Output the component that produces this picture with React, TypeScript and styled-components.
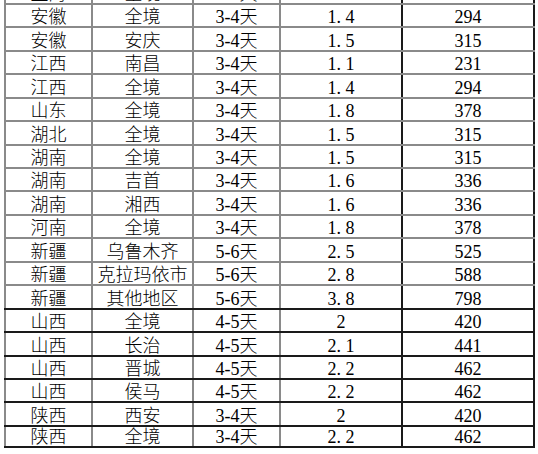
import styled, { createGlobalStyle } from "styled-components"

const GlobalStyle = createGlobalStyle`
  html, body {
    margin: 0;
    padding: 0;
    background: #ffffff;
    overflow: hidden;
  }
`

const Viewport = styled.div`
  width: 538px;
  height: 454px;
  overflow: hidden;
  background: #ffffff;
`

// the sheet is scrolled so the first row is cut at the top
const Sheet = styled.div`
  display: flex;
  flex-direction: column;
  margin-top: -20.5px;
  margin-left: 4px;
  width: 531px;
  font-family: "Liberation Serif", "Noto Sans CJK SC", serif;
  font-size: 18px;
  font-weight: 300;
  color: #000000;
`

const Row = styled.div<{ $bold?: boolean; $last?: boolean }>`
  display: grid;
  grid-template-columns: 89px 101px 87px 122px 132px;
  box-sizing: border-box;
  height: 23.45px;
  border-top: 2px solid ${(p) => (p.$bold ? "#1a1a1a" : "#8a8a8a")};
  border-bottom: ${(p) => (p.$last ? "2px solid #1a1a1a" : "none")};
`

const Cell = styled.div<{ $edge?: "first" | "dark" }>`
  box-sizing: border-box;
  display: flex;
  align-items: flex-end;
  justify-content: center;
  line-height: 1;
  padding-bottom: 0;
  white-space: nowrap;
  border-right: 2px solid
    ${(p) => (p.$edge === "dark" ? "#1a1a1a" : "#8a8a8a")};
  border-left: ${(p) => (p.$edge === "first" ? "2px solid #8a8a8a" : "none")};
`

const Dot = styled.span`
  display: inline-block;
  width: 9px;
  text-align: left;
`

type Rate = {
  province: string
  city: string
  days: string
  factor: string
  price: string
}

const rates: Rate[] = [
  { province: "上海", city: "全境", days: "1-2天", factor: "1.2", price: "252" },
  { province: "安徽", city: "全境", days: "3-4天", factor: "1.4", price: "294" },
  { province: "安徽", city: "安庆", days: "3-4天", factor: "1.5", price: "315" },
  { province: "江西", city: "南昌", days: "3-4天", factor: "1.1", price: "231" },
  { province: "江西", city: "全境", days: "3-4天", factor: "1.4", price: "294" },
  { province: "山东", city: "全境", days: "3-4天", factor: "1.8", price: "378" },
  { province: "湖北", city: "全境", days: "3-4天", factor: "1.5", price: "315" },
  { province: "湖南", city: "全境", days: "3-4天", factor: "1.5", price: "315" },
  { province: "湖南", city: "吉首", days: "3-4天", factor: "1.6", price: "336" },
  { province: "湖南", city: "湘西", days: "3-4天", factor: "1.6", price: "336" },
  { province: "河南", city: "全境", days: "3-4天", factor: "1.8", price: "378" },
  { province: "新疆", city: "乌鲁木齐", days: "5-6天", factor: "2.5", price: "525" },
  { province: "新疆", city: "克拉玛依市", days: "5-6天", factor: "2.8", price: "588" },
  { province: "新疆", city: "其他地区", days: "5-6天", factor: "3.8", price: "798" },
  { province: "山西", city: "全境", days: "4-5天", factor: "2", price: "420" },
  { province: "山西", city: "长治", days: "4-5天", factor: "2.1", price: "441" },
  { province: "山西", city: "晋城", days: "4-5天", factor: "2.2", price: "462" },
  { province: "山西", city: "侯马", days: "4-5天", factor: "2.2", price: "462" },
  { province: "陕西", city: "西安", days: "3-4天", factor: "2", price: "420" },
  { province: "陕西", city: "全境", days: "3-4天", factor: "2.2", price: "462" }
]

// rows from 山西 down have the heavy borders
const BOLD_FROM = 14

// half-width dot like the sheet's font
const Factor = ({ value }: { value: string }) => {
  const [whole, frac] = value.split(".")
  if (frac === undefined) return <>{whole}</>
  return (
    <>
      {whole}
      <Dot>.</Dot>
      {frac}
    </>
  )
}

const App = () => {
  return (
    <Viewport>
      <GlobalStyle />
      <Sheet>
        {rates.map((r, i) => (
          <Row key={i} $bold={i >= BOLD_FROM} $last={i === rates.length - 1}>
            <Cell $edge="first">{r.province}</Cell>
            <Cell>{r.city}</Cell>
            <Cell>{r.days}</Cell>
            <Cell $edge="dark">
              <Factor value={r.factor} />
            </Cell>
            <Cell $edge="dark">{r.price}</Cell>
          </Row>
        ))}
      </Sheet>
    </Viewport>
  )
}

export default App
